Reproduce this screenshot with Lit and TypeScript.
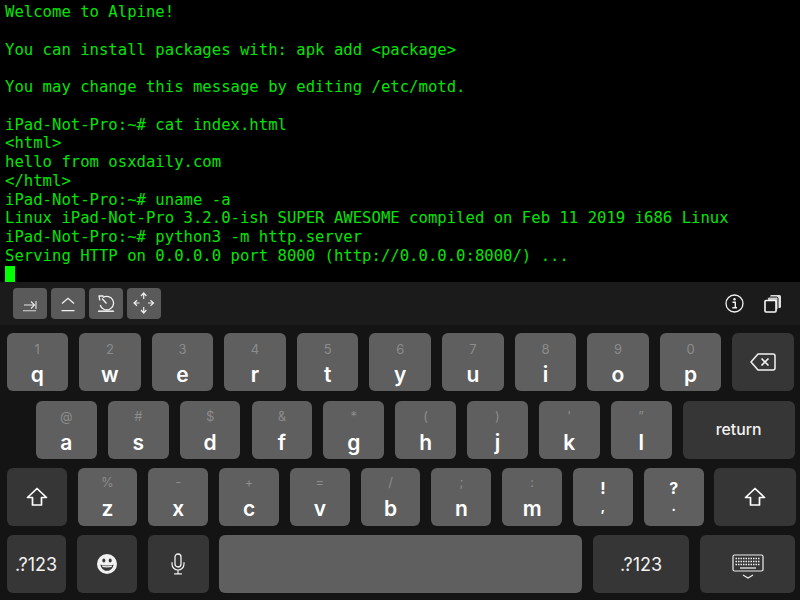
import { LitElement, html, css, svg } from "lit";
import { customElement } from "lit/decorators.js";

const LINES = `Welcome to Alpine!

You can install packages with: apk add <package>

You may change this message by editing /etc/motd.

iPad-Not-Pro:~# cat index.html
<html>
hello from osxdaily.com
</html>
iPad-Not-Pro:~# uname -a
Linux iPad-Not-Pro 3.2.0-ish SUPER AWESOME compiled on Feb 11 2019 i686 Linux
iPad-Not-Pro:~# python3 -m http.server
Serving HTTP on 0.0.0.0 port 8000 (http://0.0.0.0:8000/) ...`;

const shift = svg`<svg class="ic" width="22" height="20" viewBox="0 0 22 20"><path d="M11 1.500 L20.500 10.500 H15.500 V18 H6.500 V10.500 H1.500 Z" fill="none" stroke="#fff" stroke-width="1.700" stroke-linejoin="round"/></svg>`;
const back = svg`<svg class="ic" width="26" height="18" viewBox="0 0 26 18"><path d="M8 1 H23 a2 2 0 0 1 2 2 V15 a2 2 0 0 1 -2 2 H8 L1 9 Z" fill="none" stroke="#f2f2f2" stroke-width="1.500" stroke-linejoin="round"/><path d="M11.500 5.500 L18.500 12.500 M18.500 5.500 L11.500 12.500" stroke="#f2f2f2" stroke-width="1.600"/></svg>`;
const emoji = svg`<svg class="ic" width="20" height="20" viewBox="0 0 20 20"><circle cx="10" cy="10" r="10" fill="#f2f2f2"/><ellipse cx="6.800" cy="6.600" rx="1.500" ry="2" fill="#383838"/><ellipse cx="13.200" cy="6.600" rx="1.500" ry="2" fill="#383838"/><path d="M3.500 10.500 C7 11.800 13 11.800 16.500 10.500 C16 14.500 13.200 16.800 10 16.800 C6.800 16.800 4 14.500 3.500 10.500 Z" fill="#383838"/><path d="M5 11.600 C8 12.400 12 12.400 15 11.600 L14.600 13 C12 13.600 8 13.600 5.400 13 Z" fill="#f2f2f2"/></svg>`;
const mic = svg`<svg class="ic" width="14" height="22" viewBox="0 0 14 22"><rect x="4" y="1" width="6" height="13" rx="3" fill="none" stroke="#f2f2f2" stroke-width="1.300"/><path d="M1 9.500 V11 a6 6 0 0 0 12 0 V9.500 M7 17 V20.500 M3.500 20.800 H10.500" fill="none" stroke="#f2f2f2" stroke-width="1.200" stroke-linecap="round"/></svg>`;
const kbd = svg`<svg class="ic kb" width="32" height="25" viewBox="0 0 32 25"><rect x="1" y="1" width="30" height="16" rx="1.500" fill="none" stroke="#eee" stroke-width="1.200"/><g stroke="#eee" stroke-width="1.300" stroke-dasharray="1.500 1"><path d="M3.500 4.500 H28.500 M3.500 7.500 H28.500 M3.500 10.500 H28.500"/></g><path d="M8 14 H24" stroke="#eee" stroke-width="1.300"/><path d="M11 21 L16 24 L21 21" fill="none" stroke="#eee" stroke-width="1.200"/></svg>`;

const tools = [
  svg`<svg width="33.500" height="31" viewBox="0 0 33.500 31"><path d="M10 22.700 H23" stroke="#bdbdbd" stroke-width="1.300"/><path d="M11 17 H21.500 M18 13.500 L21.500 17 L18 20.500 M23 13 V21" fill="none" stroke="#e8e8e8" stroke-width="1.100"/></svg>`,
  svg`<svg width="33.500" height="31" viewBox="0 0 33.500 31"><path d="M11 15.500 L17 10.300 L23 15.500 M10.500 22.700 H23.500" fill="none" stroke="#f2f2f2" stroke-width="1.300"/></svg>`,
  svg`<svg width="33.500" height="31" viewBox="0 0 33.500 31"><path d="M14 9.500 A6.800 6.800 0 1 1 11.200 17 M9.500 8 H14.500 M10 8 L10.800 12.500 M13 10.500 L17.500 15.500" fill="none" stroke="#f2f2f2" stroke-width="1.300"/><path d="M9 23.200 H25" stroke="#f2f2f2" stroke-width="1.500"/></svg>`,
  svg`<svg width="33.500" height="31" viewBox="0 0 33.500 31"><path d="M16.700 5.500 V11 M16.700 19 V24.500 M7 15 H12.500 M21 15 H26.500 M14 8 L16.700 5 L19.400 8 M14 22 L16.700 25 L19.400 22 M10 12.300 L7 15 L10 17.700 M23.500 12.300 L26.500 15 L23.500 17.700" fill="none" stroke="#ececec" stroke-width="1.200"/></svg>`,
];

type K = { l?: string; h?: string; w: number; dark?: boolean; gap: number; ic?: unknown; txt?: boolean; sym?: string[] };

const mk = (pairs: string[][], w: number, gap: number): K[] =>
  pairs.map(([h, l]) => ({ h, l, w, gap }));

const row1: K[] = [
  ...mk(
    [["1","q"],["2","w"],["3","e"],["4","r"],["5","t"],["6","y"],["7","u"],["8","i"],["9","o"],["0","p"]],
    61.500, 11.100
  ),
  { ic: back, w: 62, dark: true, gap: 0 },
];
const row2: K[] = [
  ...mk(
    [["@","a"],["#","s"],["$","d"],["&","f"],["*","g"],["(","h"],[")","j"],["'","k"],["\u201d","l"]],
    60.800, 11.050
  ),
  { l: "return", txt: true, w: 112, dark: true, gap: 0 },
];
const row3: K[] = [
  { ic: shift, w: 60.500, dark: true, gap: 10.500 },
  ...mk(
    [["%","z"],["-","x"],["+","c"],["=","v"],["/","b"],[";","n"],[":","m"]],
    59.800, 11
  ),
  { sym: ["!", ","], w: 59.800, gap: 11 },
  { sym: ["?", "."], w: 59.800, gap: 10 },
  { ic: shift, w: 82, dark: true, gap: 0 },
];
const row4: K[] = [
  { l: ".?123", txt: true, w: 59, dark: true, gap: 11.500 },
  { ic: emoji, w: 60, dark: true, gap: 11 },
  { ic: mic, w: 60.500, dark: true, gap: 10.500 },
  { w: 363, gap: 11 },
  { l: ".?123", txt: true, w: 96, dark: true, gap: 11 },
  { ic: kbd, w: 95, dark: true, gap: 0 },
];

@customElement("app-root")
export class AppRoot extends LitElement {
  static styles = css`
    :host { display: block; width: 800px; height: 600px; overflow: hidden; background: #000; }
    .term {
      height: 282px; box-sizing: border-box; padding: 3px 0 0 5px; margin: 0; background: #000;
      color: #06e206; font: 15.620px/18.750px "DejaVu Sans Mono", monospace; white-space: pre;
    }
    .cursor { display: block; width: 10px; height: 17px; margin: 0 0 0 -0.500px; background: #00ff00; }
    .kbd { height: 318px; background: #141414; display: flex; flex-direction: column; }
    .bar {
      height: 43px; flex: none; box-sizing: border-box; background: #1b1b1b; padding: 6px 19px 0 13px;
      display: flex; gap: 4.500px; align-items: flex-start;
    }
    .tool {
      width: 33.500px; height: 30.500px; border-radius: 4px; background: #5a5a5a;
      display: flex; align-items: center; justify-content: center;
    }
    .right { margin-left: auto; display: flex; align-items: center; gap: 20px; height: 31px; }
    .rows { display: flex; flex-direction: column; gap: 9.300px; padding: 8.300px 5px 0 6.500px; }
    .row { display: flex; height: 58px; }
    .row.r2 { padding-left: 29.500px; }
    .key {
      flex: none; height: 100%; box-sizing: border-box; border-radius: 6px; background: #5f5f5f;
      position: relative; display: flex; flex-direction: column; align-items: center; justify-content: center;
      color: #fff; font-family: Inter, "Liberation Sans", sans-serif;
    }
    .key.dark { background: #363636; }
    .hint { position: absolute; top: 7.500px; left: 0; right: 0; text-align: center; font-size: 13px; line-height: 17px; color: #8c8c8c; }
    .let { position: absolute; top: 29px; left: 0; right: 0; text-align: center; font-size: 21px; line-height: 26px; font-weight: 600; }
    .r3 .let { top: 28px; }
    .r3 .hint { top: 6px; }
    .txt { font-size: 15.800px; font-weight: 500; color: #f2f2f2; }
    .txt.n { font-size: 18px; font-weight: 400; }
    .s1, .s2 { position: absolute; left: 0; right: 0; text-align: center; font-weight: 700; }
    .s1 { top: 11.500px; font-size: 16px; line-height: 18px; }
    .s2 { top: 30.500px; font-size: 13px; line-height: 16px; }
    .ic { display: block; }
    .kb { margin-top: 4px; }
  `;

  private key(k: K) {
    const cls = `key ${k.dark ? "dark" : ""}`;
    const st = `width:${k.w}px;margin-right:${k.gap}px`;
    if (k.ic) return html`<div class=${cls} style=${st}>${k.ic}</div>`;
    if (k.sym) return html`<div class=${cls} style=${st}><span class="s1">${k.sym[0]}</span><span class="s2">${k.sym[1]}</span></div>`;
    if (k.txt) return html`<div class=${cls} style=${st}><span class="txt ${k.l === "return" ? "" : "n"}">${k.l}</span></div>`;
    if (!k.l) return html`<div class=${cls} style=${st}></div>`;
    return html`<div class=${cls} style=${st}><span class="hint">${k.h}</span><span class="let">${k.l}</span></div>`;
  }

  render() {
    return html`
      <pre class="term">${LINES}
<span class="cursor"></span></pre>
      <div class="kbd">
        <div class="bar">
          ${tools.map((t) => html`<div class="tool">${t}</div>`)}
          <div class="right">
            <svg width="19" height="19" viewBox="0 0 19 19"><circle cx="9.500" cy="9.500" r="8.500" fill="none" stroke="#f2f2f2" stroke-width="1.300"/><circle cx="9.500" cy="5.300" r="1.200" fill="#f2f2f2"/><path d="M7.500 8.300 H10.300 V13.500 M7.300 13.800 H12" fill="none" stroke="#f2f2f2" stroke-width="1.400"/></svg>
            <svg width="17" height="18" viewBox="0 0 17 18"><rect x="6" y="0" width="11" height="13" rx="1.500" fill="#e0e0e0"/><rect x="3.500" y="2" width="10.500" height="13" rx="1.500" fill="#c8c8c8" stroke="#1b1b1b"/><rect x="1" y="5.500" width="11" height="11.500" rx="1" fill="#1b1b1b" stroke="#f8f8f8" stroke-width="1.600"/></svg>
          </div>
        </div>
        <div class="rows">
          <div class="row">${row1.map((k) => this.key(k))}</div>
          <div class="row r2">${row2.map((k) => this.key(k))}</div>
          <div class="row r3">${row3.map((k) => this.key(k))}</div>
          <div class="row">${row4.map((k) => this.key(k))}</div>
        </div>
      </div>
    `;
  }
}
